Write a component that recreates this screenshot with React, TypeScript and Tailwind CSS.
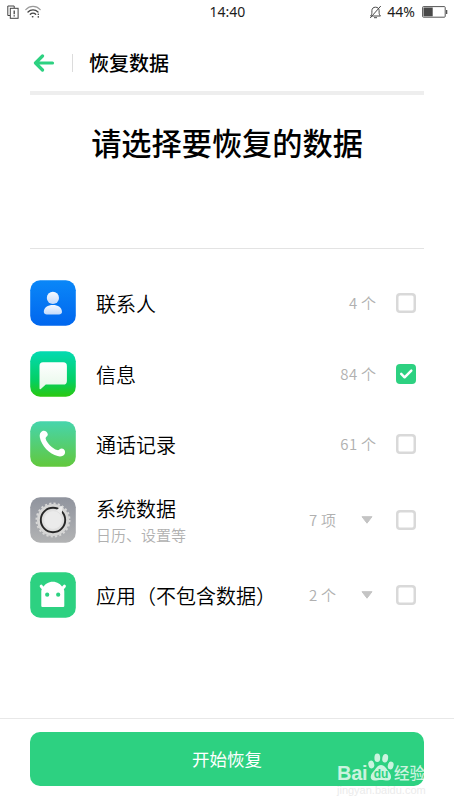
import React, { useState } from 'react';
import clsx from 'clsx';

interface RestoreItem {
  id: string;
  label: string;
  hint?: string;
  count: number;
  unit: string;
  expandable?: boolean;
  icon: React.ReactNode;
}

function ContactsIcon() {
  return (
    <svg viewBox="0 0 46 46" className="size-[46px]">
      <defs>
        <linearGradient id="contacts-bg" x1="0" y1="0" x2="0" y2="1">
          <stop offset="0" stopColor="#0a87f8" />
          <stop offset="1" stopColor="#0066ee" />
        </linearGradient>
        <linearGradient id="contacts-fg" x1="0" y1="0" x2="0" y2="1">
          <stop offset="0" stopColor="#f5f9ff" />
          <stop offset="1" stopColor="#c3dafb" />
        </linearGradient>
      </defs>
      <rect x="0.2" y="0.2" width="45.6" height="45.6" rx="10" fill="url(#contacts-bg)" />
      <circle cx="22.9" cy="17.9" r="6.1" fill="url(#contacts-fg)" />
      <path d="M13.8 32c0-4.6 4-7.1 9.1-7.1s9.1 2.5 9.1 7.1c0 1.7-1.4 2.4-3 2.4H16.8c-1.6 0-3-.7-3-2.4z" fill="url(#contacts-fg)" />
    </svg>
  );
}

function MessagesIcon() {
  return (
    <svg viewBox="0 0 46 46" className="size-[46px]">
      <defs>
        <linearGradient id="messages-bg" x1="0" y1="0" x2="0" y2="1">
          <stop offset="0" stopColor="#04dab2" />
          <stop offset="0.65" stopColor="#04cf62" />
          <stop offset="1" stopColor="#2bc80e" />
        </linearGradient>
        <linearGradient id="messages-fg" x1="0" y1="0" x2="0" y2="1">
          <stop offset="0" stopColor="#ffffff" />
          <stop offset="1" stopColor="#e6f8e9" />
        </linearGradient>
      </defs>
      <rect x="0.2" y="0.2" width="45.6" height="45.6" rx="10" fill="url(#messages-bg)" />
      <path d="M13 11.3h20.3a3.6 3.6 0 0 1 3.6 3.6v15a3.6 3.6 0 0 1-3.6 3.6H15.8l-5 4.4c-.8.7-1.3.3-1.3-.6V14.9a3.6 3.6 0 0 1 3.5-3.6z" fill="url(#messages-fg)" />
    </svg>
  );
}

function CallsIcon() {
  return (
    <svg viewBox="0 0 46 46" className="size-[46px]">
      <defs>
        <linearGradient id="calls-bg" x1="0" y1="0" x2="0" y2="1">
          <stop offset="0" stopColor="#46d5ad" />
          <stop offset="1" stopColor="#62c83c" />
        </linearGradient>
      </defs>
      <rect x="0.2" y="0.2" width="45.6" height="45.6" rx="10" fill="url(#calls-bg)" />
      <path
        d="M12.500 9.900c2.300-.9 5.100 1 5.300 3.300.2 2.100-2.500 2.700-2.100 4.600.9 4.200 6.900 10.100 11.500 11.300 2 .5 2.600-1.700 4.600-1.600 2.600.2 4 3 3 5.200-1.100 2.400-4 3.200-7.200 2.400C19.500 33.100 11.500 24.800 9.800 16.200c-.5-3 .6-5.400 2.700-6.300z"
        fill="#fff"
      />
    </svg>
  );
}

function SystemIcon() {
  return (
    <svg viewBox="0 0 46 46" className="size-[46px]">
      <defs>
        <linearGradient id="system-bg" x1="0" y1="0" x2="0" y2="1">
          <stop offset="0" stopColor="#90949e" />
          <stop offset="1" stopColor="#b2b3b4" />
        </linearGradient>
      </defs>
      <rect x="0.2" y="0.2" width="45.6" height="45.6" rx="10" fill="url(#system-bg)" />
      <circle cx="23" cy="23" r="16" fill="#d6d6d5" />
      <circle cx="23" cy="23" r="16.600" fill="none" stroke="#d8d8d7" strokeWidth="1.800" strokeDasharray="2.200 2.146" />
      <circle cx="23" cy="23" r="12.200" fill="#dededd" stroke="#262626" strokeWidth="1.900" />
      <path d="M25 14.500l5.900-5.200q1.700-.6 1.700 1.200l-1 6.500z" fill="#ececec" />
      <circle cx="23" cy="23" r="9.900" fill="#ebebeb" />
      <circle cx="23" cy="23" r="9.400" fill="none" stroke="#d9d9d9" strokeWidth="0.600" />
    </svg>
  );
}

function AppsIcon() {
  return (
    <svg viewBox="0 0 46 46" className="size-[46px]">
      <rect x="0.2" y="0.2" width="45.6" height="45.6" rx="10" fill="#2dd181" />
      <path
        d="M11.300 34V19.500c0-1.500.4-2.500 1.200-3.300 2.200-4 6-6.400 10.300-6.400s8.100 2.400 10.300 6.400c.8.8 1.200 1.800 1.200 3.300V34q0 1.100-1.100 1.100H12.400q-1.100 0-1.100-1.100z"
        fill="#fff"
      />
      <path d="M11.200 14.200l2.600 3M34.400 14.200l-2.600 3" stroke="#fff" strokeWidth="3" strokeLinecap="round" />
      <circle cx="17.200" cy="22.700" r="2.100" fill="#2dd181" />
      <circle cx="28.200" cy="22.700" r="2.100" fill="#2dd181" />
    </svg>
  );
}

const ITEMS: RestoreItem[] = [
  { id: 'contacts', label: '联系人', count: 4, unit: '个', icon: <ContactsIcon /> },
  { id: 'messages', label: '信息', count: 84, unit: '个', icon: <MessagesIcon /> },
  { id: 'calls', label: '通话记录', count: 61, unit: '个', icon: <CallsIcon /> },
  { id: 'system', label: '系统数据', hint: '日历、设置等', count: 7, unit: '项', expandable: true, icon: <SystemIcon /> },
  { id: 'apps', label: '应用（不包含数据）', count: 2, unit: '个', expandable: true, icon: <AppsIcon /> },
];

function StatusBar() {
  return (
    <div className="grid h-6 grid-cols-3 items-center pr-1.5 pl-[7px] font-['Noto_Sans'] text-[14px] text-[#1c1c1c]">
      <div className="flex items-center gap-1.5">
        <svg viewBox="0 0 12 14" className="h-3.5 w-3 fill-none stroke-[#444]">
          <path d="M3 10.500H.8V1h6.400v2" />
          <rect x="3.300" y="3.300" width="7.800" height="10" />
          <path d="M7.200 5.500v3.700M7.200 10.200v1.300" strokeWidth="1.300" />
        </svg>
        <svg viewBox="0 0 16 14" className="h-3.5 w-4 fill-none stroke-[#444]" strokeLinecap="round">
          <path d="M.8 4.600C4.800.4 11.200.4 15.200 4.600" stroke="#999" strokeWidth="1.200" />
          <path d="M3 7c2.800-2.900 7.200-2.900 10 0M5.300 9.300c1.500-1.500 3.900-1.500 5.400 0" strokeWidth="1.300" />
          <path d="M7.500 11.700h.3M13.300 9.200v.1M13.300 11.900v.1" strokeWidth="1.600" />
        </svg>
      </div>
      <span className="-mt-px text-center">14:40</span>
      <div className="flex items-center justify-end">
        <svg viewBox="0 0 13 14" className="mr-[5px] h-3.5 w-[13px] fill-none stroke-[#4a4a4a]">
          <path d="M1.500 11h10c-1-1-1.400-2-1.400-3.800V5.500c0-2-1.400-3.300-3.600-3.300S2.900 3.500 2.900 5.500v1.700C2.900 9 2.500 10 1.500 11zM5 12.700h3M11.800 1L1.200 13" />
        </svg>
        <span className="-mt-0.5 mr-[7px]">44%</span>
        <svg viewBox="0 0 26 12" className="h-3 w-[26px]">
          <rect x="0.600" y="0.600" width="22.600" height="10.600" rx="0.800" fill="none" stroke="#555" />
          <rect x="1.500" y="1.500" width="9.200" height="8.800" fill="#484848" />
          <rect x="24" y="4" width="1.300" height="4" fill="#555" />
        </svg>
      </div>
    </div>
  );
}

function Checkbox({ checked }: { checked: boolean }) {
  return (
    <span
      className={clsx(
        'flex size-5 shrink-0 items-center justify-center rounded-[4px]',
        checked ? 'bg-[#2dd181]' : 'shadow-[inset_0_0_0_2.5px_#d9d9d9]'
      )}
    >
      {checked && (
        <svg viewBox="0 0 20 20" className="size-5">
          <path d="M5.200 9.900l3.400 3.400L15.300 6.700" fill="none" stroke="#fff" strokeWidth="2.500" strokeLinecap="round" strokeLinejoin="round" />
        </svg>
      )}
    </span>
  );
}

interface RestoreRowProps {
  item: RestoreItem;
  checked: boolean;
  onToggle: () => void;
}

function RestoreRow({ item, checked, onToggle }: RestoreRowProps) {
  return (
    <button
      type="button"
      role="checkbox"
      aria-checked={checked}
      onClick={onToggle}
      className={clsx('flex w-full items-center text-left font-[350]', item.hint ? 'h-[80.5px]' : 'h-[70.5px]')}
    >
      {item.icon}
      <span className="ml-5 flex flex-1 flex-col pt-0.5">
        <span className="text-[20px] leading-7 whitespace-nowrap text-black">{item.label}</span>
        {item.hint && <span className="text-[15px] leading-6 text-[#b0b0b0]">{item.hint}</span>}
      </span>
      <span className="pt-px text-[15px] text-[#b0b0b0]">
        <span className="tracking-[0.5px]">{item.count}</span> {item.unit}
      </span>
      {item.expandable && (
        <svg viewBox="0 0 12 8" className="ml-[25px] h-2 w-3">
          <path d="M1 .7h10L6 7.200z" fill="#c4c4c4" stroke="#c4c4c4" strokeLinejoin="round" />
        </svg>
      )}
      <span className={clsx('mr-2', item.expandable ? 'ml-[23px]' : 'ml-5')}>
        <Checkbox checked={checked} />
      </span>
    </button>
  );
}

function Watermark() {
  return (
    <div className="pointer-events-none absolute top-[20px] left-[337px] w-[92px] whitespace-nowrap">
      <div className="flex h-[28px] items-end text-white/75">
        <span className="w-[31px] translate-y-[2px] font-['Liberation_Sans'] text-[20px] leading-[19px] font-bold tracking-[-0.3px]">Bai</span>
        <svg viewBox="0 0 26 28" className="h-7 w-[26px]">
          <path
            d="M13 12c4 0 5.500 4 8 7s3.500 8.500-1.500 8.500c-2.500 0-4-.5-6.500-.5s-4 .5-6.500.5C1.500 27.500 2 22 5 19s4-7 8-7z"
            fill="currentColor"
          />
          <g fill="currentColor">
            <ellipse cx="3.300" cy="11.500" rx="2.900" ry="4" transform="rotate(-15 3.300 11.500)" />
            <ellipse cx="9.300" cy="4.800" rx="2.900" ry="4.300" />
            <ellipse cx="17.200" cy="5.200" rx="2.900" ry="4.300" transform="rotate(10 17.200 5.200)" />
            <ellipse cx="22.700" cy="12.500" rx="2.800" ry="4" transform="rotate(15 22.700 12.500)" />
          </g>
          <text x="13" y="25" textAnchor="middle" fontFamily="Liberation Sans" fontWeight="bold" fontSize="12" fill="#2dd181">
            du
          </text>
        </svg>
        <span className="text-[15.500px] leading-[18px] font-medium">经验</span>
      </div>
      <div className="mt-[3px] font-['Liberation_Sans'] text-[11px] leading-[13px] text-[#ebebeb]">jingyan.baidu.com</div>
    </div>
  );
}

export default function App() {
  const [selected, setSelected] = useState<string[]>(['messages']);

  const toggle = (id: string) => {
    setSelected(prev => (prev.includes(id) ? prev.filter(s => s !== id) : [...prev, id]));
  };

  return (
    <div className="flex h-[807px] w-[454px] flex-col bg-white font-['Noto_Sans_CJK_SC',sans-serif]">
      <StatusBar />

      <header className="mx-[30px] flex h-[71px] items-center border-b-4 border-[#eeeeee] pt-[10px]">
        <svg viewBox="0 0 22 18" className="ml-[3px] h-[18px] w-[22px]">
          <path d="M9.500 2L2.500 9l7 7M3 9h16.500" fill="none" stroke="#2dd181" strokeWidth="3.200" strokeLinecap="round" strokeLinejoin="round" />
        </svg>
        <span className="ml-[17px] h-[18px] w-px bg-[#dcdcdc]" />
        <span className="ml-4 pt-px text-[20px] leading-7 font-medium text-black">恢复数据</span>
      </header>

      <div className="mx-[30px] h-[154px] border-b border-[#e3e3e3] pt-[25px] text-center">
        <h1 className="text-[30.200px] leading-[44px] font-medium text-black">请选择要恢复的数据</h1>
      </div>

      <main className="mx-[30px] mt-[18.750px] flex-1">
        {ITEMS.map(item => (
          <RestoreRow key={item.id} item={item} checked={selected.includes(item.id)} onToggle={() => toggle(item.id)} />
        ))}
      </main>

      <footer className="relative h-[89px] border-t border-[#e8e8e8] px-[30px] pt-[13px]">
        <button type="button" className="h-[54px] w-full rounded-[10px] bg-[#2dd181] text-[17.500px] text-white">
          开始恢复
        </button>
        <div className="absolute inset-x-0 top-[14px]">
          <Watermark />
        </div>
      </footer>
    </div>
  );
}
